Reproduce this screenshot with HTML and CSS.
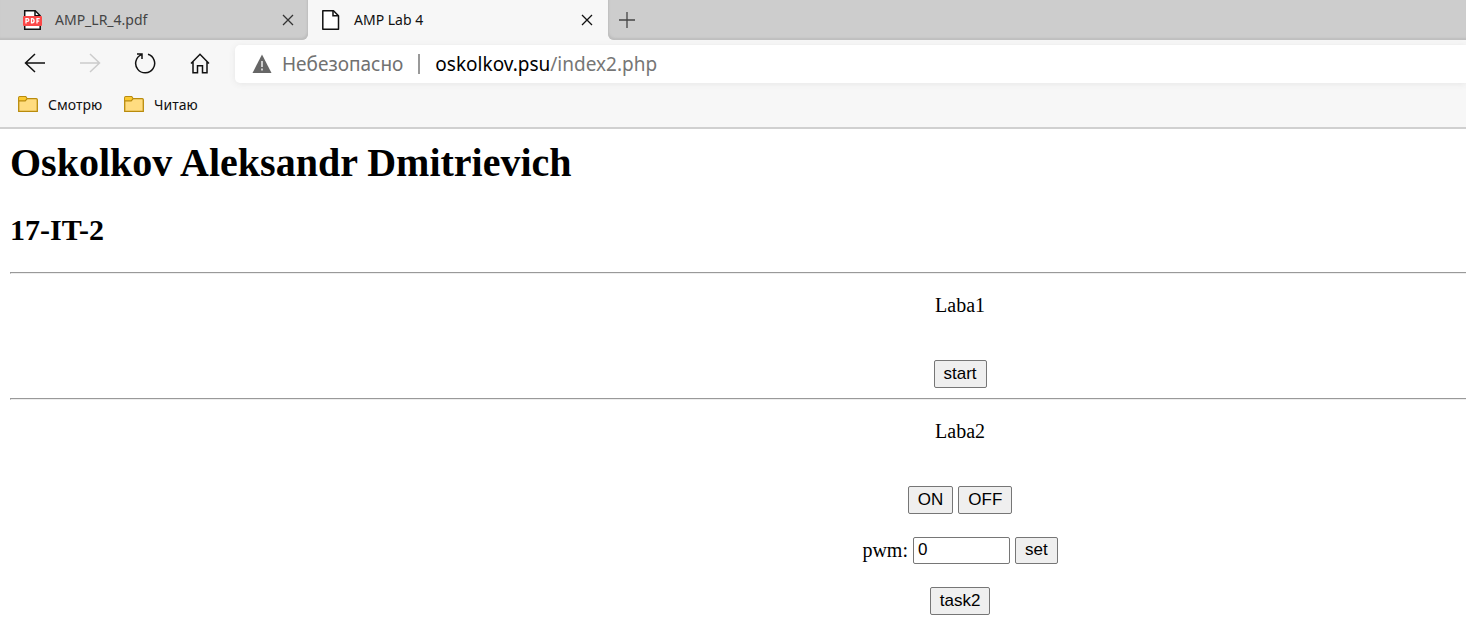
FILE: index.html
```html
<!DOCTYPE html>
<html lang="ru">
<head>
<meta charset="utf-8">
<title>AMP Lab 4</title>
<link rel="stylesheet" href="styles.css">
</head>
<body>
<header class="browser">
  <div class="tabs">
    <div class="tab">
      <svg class="tab-icon" width="20" height="20" viewBox="0 0 20 20" aria-hidden="true">
        <path d="M1.700.8h10.500l5 5v13.400H1.700z" fill="#fff" stroke="#111" stroke-width="1.500"/>
        <path d="M12 .8v5h5" fill="none" stroke="#111" stroke-width="1.500"/>
        <rect x="0" y="6" width="19" height="10" rx="1" fill="#fb4848"/>
        <path d="M3 13.500V8.700h1.500a1.300 1.300 0 0 1 0 2.700H3M8.500 8.700v4.200h.7c2.500 0 2.500-4.200 0-4.200zM14 13.500V8.700h2.700M14 11.200h2.200" fill="none" stroke="#fff" stroke-width="1.300"/>
      </svg>
      <span class="tab-title">AMP_LR_4.pdf</span>
      <button class="icon-button" aria-label="Закрыть AMP_LR_4.pdf">
        <svg width="12" height="12" viewBox="0 0 12 12"><path d="M1 1l10 10M11 1L1 11" stroke="#333" stroke-width="1.300"/></svg>
      </button>
    </div>
    <div class="tab tab-active">
      <svg class="tab-icon" width="20" height="20" viewBox="0 0 20 20" aria-hidden="true">
        <path d="M.8.800h10.700l5 5v13.400H.8z" fill="#fff" stroke="#111" stroke-width="1.500" stroke-linejoin="round"/>
        <path d="M11 .8v5h5.500" fill="none" stroke="#111" stroke-width="1.500"/>
      </svg>
      <span class="tab-title">AMP Lab 4</span>
      <button class="icon-button" aria-label="Закрыть AMP Lab 4">
        <svg width="12" height="12" viewBox="0 0 12 12"><path d="M1 1l10 10M11 1L1 11" stroke="#111" stroke-width="1.300"/></svg>
      </button>
    </div>
    <div class="tab-rest">
      <button class="icon-button" aria-label="Новая вкладка">
        <svg width="16" height="16" viewBox="0 0 16 16"><path d="M8 0v16M0 8h16" stroke="#444" stroke-width="1.300"/></svg>
      </button>
    </div>
  </div>
  <div class="toolbar">
    <nav class="nav">
      <button class="icon-button" aria-label="Назад">
        <svg width="22" height="22" viewBox="0 0 22 22"><path d="M21 11H1.500M11 2L1.500 11l9.500 9" fill="none" stroke="#111" stroke-width="1.500"/></svg>
      </button>
      <button class="icon-button" aria-label="Вперёд" disabled>
        <svg width="22" height="22" viewBox="0 0 22 22"><path d="M1 11h19.500M11 2l9.500 9-9.500 9" fill="none" stroke="#ccc" stroke-width="1.500"/></svg>
      </button>
      <button class="icon-button" aria-label="Обновить">
        <svg width="22" height="22" viewBox="0 0 22 22"><path d="M14 2.300A9.500 9.500 0 1 1 7.500 2.600M3 2h5v5" fill="none" stroke="#111" stroke-width="1.500"/></svg>
      </button>
      <button class="icon-button" aria-label="Домой">
        <svg width="22" height="22" viewBox="0 0 22 22"><path d="M2 11.500L11 2.300l9 9.200M4 9.500v11.200h4.500v-7h5v7H18V9.500" fill="none" stroke="#111" stroke-width="1.500"/></svg>
      </button>
    </nav>
    <div class="address">
      <svg width="20" height="20" viewBox="0 0 20 20" aria-hidden="true"><path d="M10 .5L19.500 19H.5z" fill="#666"/><path d="M10 7v6M10 14.500v2" stroke="#eee" stroke-width="1.500"/></svg>
      <span class="warning">Небезопасно</span>
      <span class="divider"></span>
      <span class="url">oskolkov.psu<span class="path">/index2.php</span></span>
    </div>
  </div>
  <nav class="bookmarks">
    <a class="bookmark" href="#">
      <svg width="20" height="16" viewBox="0 0 20 16" aria-hidden="true"><path d="M.7 15.300V1.700q0-1 1-1h6l1.300 2h9.300q1 0 1 1v11.600z" fill="#ffdc80" stroke="#b98b0c" stroke-width="1.300"/><path d="M1.200 1.200h6.300l1 1.800-1.200 1.500H1.200z" fill="#fcca2c"/><path d="M.7 4.800h6.500L9 2.800" fill="none" stroke="#b98b0c" stroke-width="1.200"/></svg>
      <span>Смотрю</span>
    </a>
    <a class="bookmark" href="#">
      <svg width="20" height="16" viewBox="0 0 20 16" aria-hidden="true"><path d="M.7 15.300V1.700q0-1 1-1h6l1.300 2h9.300q1 0 1 1v11.600z" fill="#ffdc80" stroke="#b98b0c" stroke-width="1.300"/><path d="M1.200 1.200h6.300l1 1.800-1.200 1.500H1.200z" fill="#fcca2c"/><path d="M.7 4.800h6.500L9 2.800" fill="none" stroke="#b98b0c" stroke-width="1.200"/></svg>
      <span>Читаю</span>
    </a>
  </nav>
</header>
<main class="page">
  <h1 class="name">Oskolkov Aleksandr Dmitrievich</h1>
  <h2 class="group">17-IT-2</h2>
  <hr class="rule">
  <section class="lab">
    <p class="lab-title">Laba1</p>
    <div class="row"><button class="control">start</button></div>
  </section>
  <hr class="rule">
  <section class="lab">
    <p class="lab-title">Laba2</p>
    <div class="row"><button class="control">ON</button><button class="control">OFF</button></div>
    <div class="row">
      <label for="pwm">pwm:</label>
      <input class="control field" id="pwm" type="text" value="0">
      <button class="control">set</button>
    </div>
    <div class="row"><button class="control">task2</button></div>
  </section>
</main>
</body>
</html>
```
FILE: styles.css
```css
* { box-sizing: border-box; }
body {
  margin: 0;
  background: #fff;
  color: #000;
  font-family: "Liberation Serif", serif;
  font-size: 20px;
}
svg { display: block; flex: none; }
.browser {
  background: #f7f7f7;
  border-bottom: 2px solid #d0d0d0;
  font-family: "Noto Sans", "Open Sans", sans-serif;
  font-size: 14px;
}
.tabs { display: flex; height: 40px; background: #f7f7f7; }
.tab {
  display: flex;
  align-items: center;
  gap: 12px;
  width: 308px;
  padding: 0 14px 0 23px;
  background: #cdcdcd;
  color: #444;
  border-bottom-right-radius: 6px;
  box-shadow: inset -1px -2px 2px #bdbdbd;
}
.tab-active {
  width: 300px;
  padding: 0 15px 0 14px;
  background: #f7f7f7;
  color: #111;
  border-radius: 6px 6px 0 0;
  box-shadow: none;
}
.tab-title { flex: 1; padding-bottom: 2px; }
.tab-rest {
  display: flex;
  flex: 1;
  align-items: center;
  padding-left: 11px;
  background: #cdcdcd;
  border-bottom-left-radius: 6px;
  box-shadow: inset 1px -2px 2px #bdbdbd;
}
.icon-button { padding: 0; border: 0; background: none; }
.toolbar { display: flex; padding-top: 5px; }
.nav { display: flex; align-items: center; gap: 33px; padding: 0 24px 2px; }
.address {
  display: flex;
  flex: 1;
  align-items: center;
  height: 38px;
  padding-left: 17px;
  background: #fff;
  border-radius: 5px 0 0 5px;
  box-shadow: 0 1px 6px #e6e6e6;
  font-size: 19px;
}
.warning { margin-left: 10px; color: #717171; }
.divider { width: 2px; height: 20px; margin: 0 15px; background: #999; }
.path { color: #767676; }
.bookmarks { display: flex; gap: 22px; height: 44px; padding: 0 18px 2px; }
.bookmark {
  display: flex;
  align-items: center;
  gap: 10px;
  color: #111;
  text-decoration: none;
}
.page { padding: 11px 0 10px 10px; }
.name { margin: 0; font-size: 40px; line-height: 46px; }
.group { margin: 27px 0 25px; font-size: 30px; line-height: 34px; }
.rule { margin: 0; border: 1px solid; border-color: #999 #eee #eee #999; border-right: 0; }
.lab {
  display: flex;
  flex-direction: column;
  gap: 23px;
  padding: 20px 0 10px 30.5%;
}
.lab-title { margin: 0 0 20px; line-height: 23px; text-align: center; }
.row { display: flex; justify-content: center; align-items: center; gap: 5px; }
.control {
  height: 28px;
  padding: 0 9px;
  border: 1px solid #767676;
  border-radius: 2px;
  background: #efefef;
  color: #000;
  font-family: "Liberation Sans", Arial, sans-serif;
  font-size: 17px;
}
.row .control { padding-bottom: 1px; }
.row:has(.field) .control { height: 27px; }
.field { width: 97px; padding: 0 4px; background: #fff; }
```
